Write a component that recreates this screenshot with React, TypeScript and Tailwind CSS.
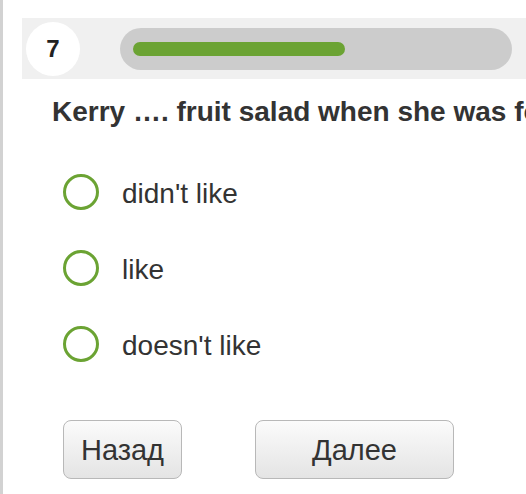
import { useState } from "react";

const options = ["didn't like", "like", "doesn't like"];

function App() {
  const [selected, setSelected] = useState<number | null>(null);

  return (
    <div className="h-[494px] w-full overflow-hidden bg-white border-l-[3px] border-[#d2d2d2] font-['Liberation_Sans',Arial,sans-serif] text-[#333333]">
      <div className="pt-[18px] pl-[19px]">
        {/* progress header */}
        <div className="flex h-[61px] items-center bg-[#f0f0f0] pl-[4px]">
          <div className="flex h-[54px] w-[54px] shrink-0 items-center justify-center rounded-full bg-white text-[24px] font-bold text-[#222]">
            7
          </div>
          <div className="ml-[40px] mr-[14px] flex h-[42px] flex-1 items-center rounded-full bg-[#cccccc] px-[13px]">
            <div className="h-[14px] w-[212px] rounded-full bg-[#6ba333]" />
          </div>
        </div>
      </div>

      <div className="pl-[49px]">
        <h2 className="mt-[18px] whitespace-nowrap text-[28px] font-bold leading-[30px]">
          Kerry …. fruit salad when she was four years old.
        </h2>

        <div className="mt-[47px] flex flex-col gap-[40px]">
          {options.map((opt, i) => (
            <label
              key={opt}
              className="flex h-[36px] cursor-pointer items-center"
              onClick={() => setSelected(i)}
            >
              <span className="ml-[11px] flex h-[36px] w-[36px] shrink-0 items-center justify-center rounded-full border-[3px] border-[#6ba333]">
                {selected === i && (
                  <span className="h-[16px] w-[16px] rounded-full bg-[#6ba333]" />
                )}
              </span>
              <span className="ml-[23px] mt-[4px] text-[28px] leading-[32px]">{opt}</span>
            </label>
          ))}
        </div>

        <div className="mt-[58px] flex">
          <button className="ml-[11px] h-[59px] w-[119px] rounded-[8px] border border-[#b8b8b8] bg-gradient-to-b from-[#fbfbfb] to-[#e4e4e4] pt-[2px] text-[29px] text-[#333]">
            Назад
          </button>
          <button className="ml-[73px] h-[59px] w-[199px] rounded-[8px] border border-[#b8b8b8] bg-gradient-to-b from-[#fbfbfb] to-[#e4e4e4] pt-[2px] text-[29px] text-[#333]">
            Далее
          </button>
        </div>
      </div>
    </div>
  );
}

export default App;
